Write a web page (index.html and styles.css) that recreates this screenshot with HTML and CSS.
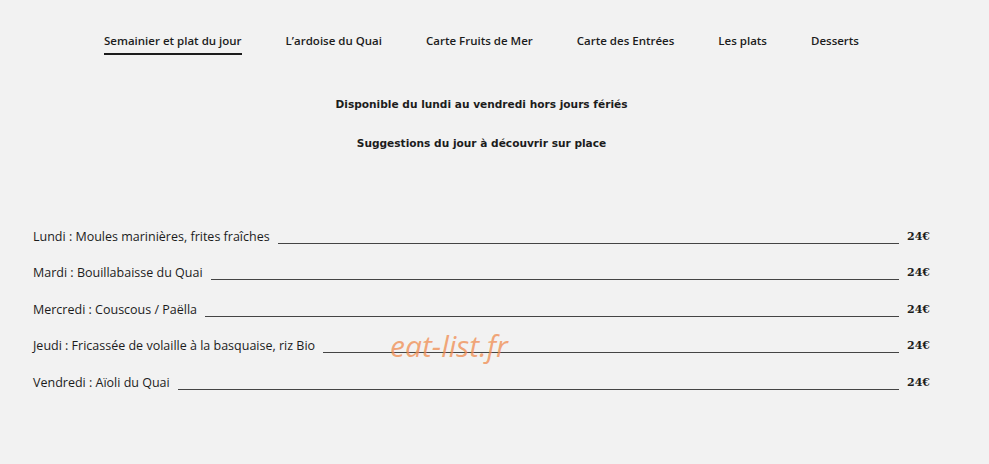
FILE: index.html
```html
<!DOCTYPE html>
<html lang="fr">
<head>
    <meta charset="UTF-8">
    <meta name="viewport" content="width=device-width, initial-scale=1.0">
    <title>Semainier et plat du jour</title>
    <link rel="stylesheet" href="styles.css">
</head>
<body>
    <div class="page">
        <nav class="tabs">
            <a class="tab active" href="#">Semainier et plat du jour</a>
            <a class="tab" href="#">L’ardoise du Quai</a>
            <a class="tab" href="#">Carte Fruits de Mer</a>
            <a class="tab" href="#">Carte des Entrées</a>
            <a class="tab" href="#">Les plats</a>
            <a class="tab" href="#">Desserts</a>
        </nav>

        <div class="intro">
            <p>Disponible du lundi au vendredi hors jours fériés</p>
            <p>Suggestions du jour à découvrir sur place</p>
        </div>

        <ul class="menu">
            <li class="dish"><span class="name">Lundi : Moules marinières, frites fraîches</span><span class="dots"></span><span class="price">24€</span></li>
            <li class="dish"><span class="name">Mardi : Bouillabaisse du Quai</span><span class="dots"></span><span class="price">24€</span></li>
            <li class="dish"><span class="name">Mercredi : Couscous / Paëlla</span><span class="dots"></span><span class="price">24€</span></li>
            <li class="dish"><span class="name">Jeudi : Fricassée de volaille à la basquaise, riz Bio</span><span class="dots"></span><span class="price">24€</span></li>
            <li class="dish"><span class="name">Vendredi : Aïoli du Quai</span><span class="dots"></span><span class="price">24€</span></li>
        </ul>

        <div class="mark">eat-list.fr</div>
    </div>
</body>
</html>
```

FILE: styles.css
```css
body {
    margin: 0;
    background-color: #f2f2f2;
    color: #1c1c1c;
    font-family: "Open Sans", "Liberation Sans", sans-serif;
}
.page {
    position: relative;
    width: 897px;
    margin-left: 33px;
    padding-top: 33px;
}
.tabs {
    display: flex;
    justify-content: center;
    gap: 44px;
}
.tab {
    color: #1c1c1c;
    text-decoration: none;
    font-size: 11.5px;
    font-weight: 600;
    padding-bottom: 5px;
    border-bottom: 2px solid transparent;
}
.tab.active {
    border-bottom-color: #1c1c1c;
}
.intro {
    margin-top: 43px;
    text-align: center;
    font-family: "DejaVu Sans", sans-serif;
    font-weight: bold;
    font-size: 10.6px;
}
.intro p {
    margin: 0 0 27px;
}
.menu {
    list-style: none;
    margin: 59px 0 0;
    padding: 0;
}
.dish {
    display: flex;
    align-items: flex-end;
    height: 36.5px;
    font-size: 12.5px;
}
.dots {
    flex: 1;
    margin: 0 8px 1px;
    border-bottom: 1px solid #444;
}
.price {
    margin-bottom: 2px;
    font-family: "DejaVu Serif", serif;
    font-weight: bold;
    font-size: 11px;
}
.mark {
    position: absolute;
    left: 357px;
    top: 325px;
    font-size: 30px;
    font-style: italic;
    color: rgba(240, 140, 80, 0.75);
}
```
